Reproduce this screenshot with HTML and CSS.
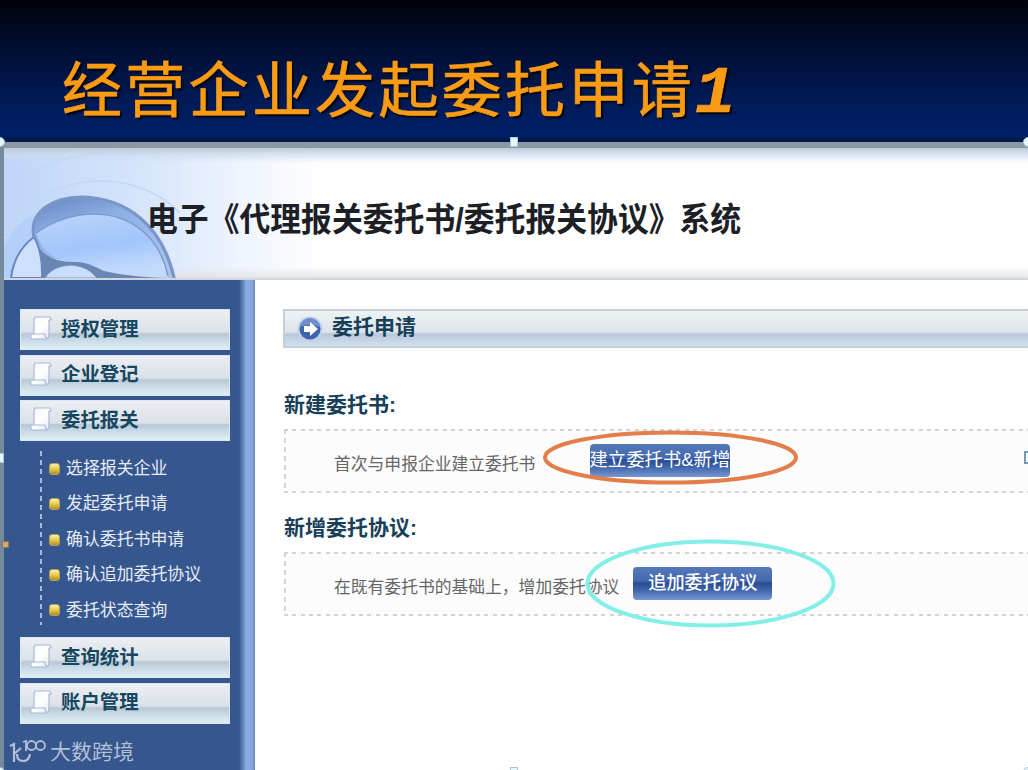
FILE: index.html
```html
<!DOCTYPE html>
<html lang="zh-CN">
<head>
    <meta charset="UTF-8">
    <meta name="viewport" content="width=device-width, initial-scale=1.0">
    <title>经营企业发起委托申请1</title>
    <link rel="stylesheet" href="styles.css">
</head>
<body>
    <svg width="0" height="0" class="defs">
        <defs>
            <linearGradient id="paper" x1="0" y1="0" x2="1" y2="1">
                <stop offset="0" stop-color="#f0f4fc"/>
                <stop offset="0.5" stop-color="#fff"/>
                <stop offset="1" stop-color="#dfe6f5"/>
            </linearGradient>
            <symbol id="scroll" viewBox="0 0 22 25">
                <path d="M5 1h14q2 0 2 3h-2v14q0 5-3 5H3q-3 0-2-5h3V5q0-3 1-4z" fill="url(#paper)" stroke="#a9b9d8" stroke-width="1.2"/>
                <path d="M4 18h11q0 4 2 4" fill="none" stroke="#a9b9d8" stroke-width="1.2"/>
            </symbol>
        </defs>
    </svg>

    <div class="slide">
        <h1 class="slide-title">经营企业发起委托申请<span class="num">1</span></h1>

        <div class="shot">
            <header class="banner">
                <svg class="swirl" width="300" height="130" viewBox="0 0 300 130">
                    <defs>
                        <linearGradient id="shell" x1="0" y1="0" x2="0.5" y2="1">
                            <stop offset="0" stop-color="#6485bb"/>
                            <stop offset="0.4" stop-color="#8fb0e6"/>
                            <stop offset="1" stop-color="#a9c2ee"/>
                        </linearGradient>
                        <linearGradient id="inner" x1="0" y1="0" x2="0.3" y2="1">
                            <stop offset="0" stop-color="#bcd4fa"/>
                            <stop offset="0.6" stop-color="#a3c5fb"/>
                            <stop offset="1" stop-color="#c4dafd"/>
                        </linearGradient>
                    </defs>
                    <path d="M4 40Q50 5 120 4" fill="none" stroke="#c3d6f3" stroke-width="1.5"/>
                    <path d="M4 90Q30 34 105 33Q150 35 180 65" fill="none" stroke="#c3d6f3" stroke-width="1.5"/>
                    <path d="M4 130V100Q15 75 34 66L40 130z" fill="#b4cff9"/>
                    <path d="M34 89C28 62 55 49 82 49C128 50 164 76 176 130H166L40 108z" fill="url(#shell)"/>
                    <path d="M36 85C53 73 72 66 94 66C132 66 162 92 168 130Q130 128 106 124Q92 114 74 114Q44 112 36 85z" fill="url(#inner)"/>
                    <path d="M34 90Q42 114 74 114Q86 113 104 123Q130 129 168 130H42Q43 110 34 90z" fill="#6a86b3"/>
                    <path d="M11 130Q14 104 34 89Q43 105 42 130z" fill="#cfe0fc" stroke="#6a88bd" stroke-width="2"/>
                    <path d="M34 90C28 62 55 49 82 49C128 50 162 78 174 130" fill="none" stroke="#7b96c6" stroke-width="3"/>
                    <path d="M36 85C53 73 72 66 94 66C132 66 160 90 168 128" fill="none" stroke="#7f9bcd" stroke-width="1.5"/>
                    <path d="M45 130Q52 118 71 117Q88 118 97 130z" fill="#cadeff" stroke="#7d94bd" stroke-width="1"/>
                </svg>
                <h2 class="system-name">电子《代理报关委托书/委托报关协议》系统</h2>
            </header>

            <div class="content">
                <nav class="sidebar">
                    <a class="menu-item"><svg class="menu-icon"><use href="#scroll"/></svg>授权管理</a>
                    <a class="menu-item"><svg class="menu-icon"><use href="#scroll"/></svg>企业登记</a>
                    <a class="menu-item"><svg class="menu-icon"><use href="#scroll"/></svg>委托报关</a>
                    <ul class="submenu">
                        <li>选择报关企业</li>
                        <li>发起委托申请</li>
                        <li>确认委托书申请</li>
                        <li>确认追加委托协议</li>
                        <li>委托状态查询</li>
                    </ul>
                    <a class="menu-item"><svg class="menu-icon"><use href="#scroll"/></svg>查询统计</a>
                    <a class="menu-item"><svg class="menu-icon"><use href="#scroll"/></svg>账户管理</a>
                    <div class="watermark">
                        <svg width="38" height="26" viewBox="0 0 38 26" fill="none" stroke="#b4bfd6" stroke-width="2.2">
                            <path d="M1 7L5 5V23"/>
                            <path d="M5 15L12 9M8 15Q8 22 14 22Q20 22 21 15"/>
                            <path d="M14 3L17 2V12" stroke-width="1.8"/>
                            <circle cx="22.5" cy="6.5" r="4.5" stroke-width="1.8"/>
                            <circle cx="31.5" cy="6.5" r="4.5" stroke-width="1.8"/>
                        </svg>
                        <span>大数跨境</span>
                    </div>
                </nav>

                <main class="main">
                    <div class="panel-bar">
                        <svg width="26" height="26" viewBox="0 0 26 26">
                            <circle cx="13" cy="13" r="12.5" fill="#c3cfea"/>
                            <circle cx="13" cy="13" r="10.5" fill="#3f64ac"/>
                            <path d="M3 11a10 9 0 0 1 20 0q-10-4-20 0z" fill="#6f8ecb"/>
                            <path d="M7 10h6V6l8 7-8 7v-4H7z" fill="#fff"/>
                        </svg>
                        <span>委托申请</span>
                    </div>

                    <h3 class="section-title">新建委托书:</h3>
                    <div class="box">
                        <span class="desc">首次与申报企业建立委托书</span>
                        <a class="btn btn-new">建立委托书&amp;新增</a>
                        <i class="tick"></i>
                    </div>

                    <h3 class="section-title">新增委托协议:</h3>
                    <div class="box">
                        <span class="desc">在既有委托书的基础上，增加委托协议</span>
                        <a class="btn btn-add">追加委托协议</a>
                    </div>
                </main>
            </div>
        </div>

        <!-- hand drawn rings over the two buttons -->
        <svg class="rings" width="1028" height="770" viewBox="0 0 1028 770" fill="none">
            <ellipse cx="670.5" cy="457.5" rx="125.5" ry="25" stroke="#e37d49" stroke-width="4"/>
            <ellipse cx="710.5" cy="583.5" rx="123" ry="42" stroke="#84eee8" stroke-width="4"/>
        </svg>

        <!-- selection handles -->
        <i class="handle round h-tl"></i>
        <i class="handle h-top"></i>
        <i class="handle round h-tr"></i>
        <i class="handle h-left"></i>
        <i class="handle h-bottom"></i>
        <i class="handle round h-bl"></i>
        <i class="handle round h-br"></i>
        <i class="adjust"></i>
    </div>
</body>
</html>
```
FILE: styles.css
```css
* {
    box-sizing: border-box;
}
body {
    margin: 0;
    font-family: "Liberation Sans", "Noto Sans CJK SC", sans-serif;
    overflow: hidden;
}
.defs {
    position: absolute;
}
.slide {
    position: relative;
    width: 1028px;
    height: 770px;
    overflow: hidden;
    display: flex;
    flex-direction: column;
    background: #fefefe;
}
.slide-title {
    margin: 0;
    height: 142px;
    padding: 39px 0 0 62px;
    background: linear-gradient(#000208 0, #000a24 30px, #00103a 60px, #001a55 100px, #002068 137px, #001a50 138px, #001a50 142px);
    color: #f99b15;
    font-family: "Noto Sans CJK SC", sans-serif;
    font-size: 60px;
    font-weight: 400;
    letter-spacing: 3.3px;
    line-height: 94px;
    white-space: nowrap;
    -webkit-text-stroke: .7px #f99b15;
    text-shadow: 2px 2px 2px #000;
}
.num {
    font-family: "Liberation Mono", monospace;
    font-size: 67px;
    font-weight: bold;
    font-style: italic;
    line-height: 60px;
}
.shot {
    flex: 1;
    display: flex;
    flex-direction: column;
    border-top: 6px solid #8c98a3;
    border-left: 4px solid #758b9d;
    min-height: 0;
}
.banner {
    position: relative;
    height: 132px;
    padding: 50px 0 0 143px;
    border-bottom: 2px solid #cfd6df;
    background:
        linear-gradient(#bdcbd3 0, rgba(205, 220, 240, .7) 7px, rgba(255, 255, 255, 0) 15px),
        linear-gradient(rgba(230, 230, 230, 0) 119px, #e3e3e3 131px),
        linear-gradient(90deg, #bfd6f8 0, #d4e4fb 130px, #f0f5fe 240px, #fefefe 320px);
}
.swirl {
    position: absolute;
    left: -4px;
    top: 0;
}
.system-name {
    position: relative;
    margin: 0;
    color: #1c2025;
    font-size: 33px;
    font-weight: bold;
    line-height: 44px;
    white-space: nowrap;
    transform: scaleX(.934);
    transform-origin: left;
}
.content {
    flex: 1;
    display: flex;
    min-height: 0;
}
.sidebar {
    width: 251px;
    padding: 29px 0 0 16px;
    background: linear-gradient(90deg, #36568e 235px, #6482b8 239px, #89a9df 242px, #8cabdf 247px, #7488bd 251px);
}
.menu-item {
    display: flex;
    align-items: center;
    width: 210px;
    height: 41px;
    margin-bottom: 4.5px;
    padding: 0 0 2px 9px;
    border: 1px solid #dce7ef;
    background: linear-gradient(#eceff2 0, #dbe1e8 22px, #b7c7d5 24px, #c5d8e4 29px, #e0eef5 39px);
    color: #164761;
    font-size: 19.4px;
    font-weight: bold;
    line-height: 30px;
}
.menu-icon {
    width: 22px;
    height: 25px;
    margin-right: 9px;
}
.submenu {
    list-style: none;
    margin: 10px 0 11px 20px;
    padding: 0 0 0 26px;
    height: 175px;
    background: repeating-linear-gradient(#a9b9d7 0 5px, transparent 5px 9px) 0 0 / 2px 174px no-repeat;
    color: #e6ecf6;
    font-size: 16.9px;
    line-height: 35.4px;
    white-space: nowrap;
}
.submenu li {
    display: flex;
    align-items: center;
    gap: 6px;
    margin-left: -17px;
}
.submenu li::before {
    content: "";
    width: 9px;
    height: 10px;
    border: 1px solid #b7a15a;
    border-radius: 3px;
    background: linear-gradient(#fbf3b2, #dfc335 60%, #b28a2f);
}
.watermark {
    display: flex;
    align-items: center;
    gap: 3px;
    margin: 14px 0 0 -11px;
    color: #b4bfd6;
    font-size: 21px;
    line-height: 28px;
    white-space: nowrap;
}
.main {
    flex: 1;
    min-width: 0;
    padding: 29px 0 0 28px;
}
.panel-bar {
    display: flex;
    align-items: center;
    gap: 9px;
    height: 39px;
    padding-left: 12px;
    border: 2px solid #c5cfd8;
    border-right: 0;
    background: linear-gradient(#eef2f5 0, #dce5e9 21px, #b8c8dc 23px, #d2dfed 35px);
    color: #173f59;
    font-size: 21px;
    font-weight: bold;
    line-height: 30px;
}
.panel-bar span {
    padding-bottom: 3px;
}
.section-title {
    margin: 42px 0 9px 1px;
    color: #173f59;
    font-size: 21px;
    font-weight: bold;
    line-height: 30px;
}
.box {
    position: relative;
    display: flex;
    height: 64px;
    margin-left: 1px;
    padding-left: 50px;
    background:
        repeating-linear-gradient(90deg, #d3d4d8 0 4px, transparent 4px 8.35px) 0 0 / 100% 2px no-repeat,
        repeating-linear-gradient(90deg, #d3d4d8 0 4px, transparent 4px 8.35px) 0 100% / 100% 2px no-repeat,
        repeating-linear-gradient(#d3d4d8 0 5px, transparent 5px 9px) 0 0 / 2px 100% no-repeat,
        #fcfcfc;
}
.box + .section-title {
    margin-top: 20px;
}
.desc {
    color: #666;
    font-size: 16.8px;
    line-height: 30px;
    padding-top: 21px;
    white-space: nowrap;
}
.btn {
    height: 33px;
    margin-top: 15px;
    border-radius: 4px;
    color: #fff;
    text-align: center;
    white-space: nowrap;
    background: linear-gradient(#5679bb 0, #4268ae 14px, #294b93 16px, #3f65ac 23px, #7897cf 33px);
}
.btn-new {
    width: 140px;
    margin-left: 55px;
    font-size: 18.4px;
    line-height: 31px;
    text-indent: -1px;
}
.btn-add {
    width: 139px;
    margin-left: 14px;
    font-size: 18.2px;
    font-weight: 500;
    line-height: 32px;
}
.tick {
    width: 10px;
    height: 13px;
    margin: 22px 0 0 294px;
    border: 2px solid #6f9db5;
    background: #fff;
    flex: none;
}
.rings {
    position: absolute;
    left: 0;
    top: 0;
}
.handle {
    position: absolute;
    width: 8px;
    height: 10px;
    border: 1px solid #a9c9d6;
    background: #e2f8fc;
}
.round {
    width: 10px;
    border-radius: 50%;
}
.h-tl {
    left: -5px;
    top: 137px;
}
.h-top {
    left: 510px;
    top: 137px;
}
.h-tr {
    left: 1023px;
    top: 137px;
}
.h-left {
    left: -4px;
    top: 453px;
}
.h-bottom {
    left: 510px;
    top: 767px;
}
.h-bl {
    left: -5px;
    top: 767px;
}
.h-br {
    left: 1023px;
    top: 767px;
}
.adjust {
    position: absolute;
    left: 2px;
    top: 541px;
    width: 7px;
    height: 7px;
    border: 1px solid #8a7a68;
    background: #d9a86c;
}
```
